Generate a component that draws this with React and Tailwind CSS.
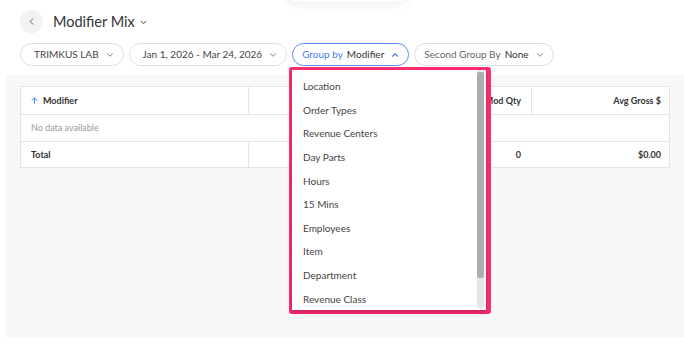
import { ChevronDown, ChevronUp, ChevronLeft, ArrowUp } from "lucide-react";

const groupOptions = [
  "Location",
  "Order Types",
  "Revenue Centers",
  "Day Parts",
  "Hours",
  "15 Mins",
  "Employees",
  "Item",
  "Department",
  "Revenue Class",
];

function Pill({ children, active, tight }) {
  const base = "flex h-[23px] items-center gap-[4px] rounded-full border pr-[8px] text-[10px]";
  return (
    <div
      className={
        base +
        (active ? " border-[#5b8def]" : " border-[#dedede]") +
        (tight ? " pl-[9px]" : " pl-[13px]")
      }
    >
      {children}
    </div>
  );
}

export default function App() {
  return (
    <div className="relative h-[346px] w-[684px] overflow-hidden bg-white font-['Lato',sans-serif] text-[#3a3a3a]">
      <div className="absolute left-[285px] top-[-22px] h-[24px] w-[125px] rounded-full bg-white shadow-[0_2px_10px_rgba(0,0,0,0.07)]" />

      <div className="flex items-center gap-[10px] px-[20px] pt-[10px]">
        <button className="flex h-[23px] w-[23px] items-center justify-center rounded-full bg-[#f2f2f2] text-[#555]">
          <ChevronLeft size={11} strokeWidth={2} />
        </button>
        <h1 className="flex items-center gap-[4px] text-[14.5px] text-[#333]">
          Modifier Mix
          <ChevronDown size={9} strokeWidth={2.4} className="mt-[2px]" />
        </h1>
      </div>

      <div className="mt-[10px] flex gap-[5px] px-[20px]">
        <Pill>
          <span className="text-[#444]">TRIMKUS LAB</span>
          <ChevronDown size={10} strokeWidth={2.2} className="ml-[2px] text-[#777]" />
        </Pill>
        <Pill>
          <span className="text-[#444]">Jan 1, 2026 - Mar 24, 2026</span>
          <ChevronDown size={10} strokeWidth={2.2} className="ml-[2px] text-[#777]" />
        </Pill>
        <Pill active tight>
          <span className="text-[#4a7cf0]">Group by</span>
          <span className="text-[#333]">Modifier</span>
          <ChevronUp size={10} strokeWidth={2.6} className="ml-[2px] text-[#4a7cf0]" />
        </Pill>
        <Pill tight>
          <span className="text-[#666]">Second Group By</span>
          <span className="text-[#333]">None</span>
          <ChevronDown size={10} strokeWidth={2.2} className="ml-[2px] text-[#777]" />
        </Pill>
      </div>

      <div className="ml-[6px] mt-[9px] h-[262px] bg-[#f8f8f8] px-[14px] pt-[11px]">
        <div className="border border-[#e4e4e4] bg-white text-[9px]">
          <div className="grid h-[28px] grid-cols-[227px_142px_141px_1fr] border-b border-[#e4e4e4] font-bold text-[#333]">
            <div className="flex items-center gap-[4px] pl-[9px]">
              <ArrowUp size={9} strokeWidth={2.5} className="text-[#3b7cf0]" />
              Modifier
            </div>
            <div className="border-l border-[#e4e4e4]" />
            <div className="flex items-center justify-end border-l border-[#e4e4e4] pr-[10px]">Mod Qty</div>
            <div className="flex items-center justify-end border-l border-[#e4e4e4] pr-[8px]">Avg Gross $</div>
          </div>
          <div className="flex h-[27px] items-center border-b border-[#e4e4e4] pl-[10px] text-[#999]">
            No data available
          </div>
          <div className="grid h-[25px] grid-cols-[227px_142px_141px_1fr] font-bold text-[#333]">
            <div className="flex items-center pl-[10px]">Total</div>
            <div className="border-l border-[#e4e4e4]" />
            <div className="flex items-center justify-end pr-[10px]">0</div>
            <div className="flex items-center justify-end pr-[8px]">$0.00</div>
          </div>
        </div>
      </div>

      <div className="absolute left-[289px] top-[67px] h-[247px] w-[202px] rounded-[3px] border-[3px] border-[#ff2d6f] bg-[#ff2d6f]">
        <div className="relative h-[240px] w-[194px] overflow-hidden bg-white shadow-[0_2px_4px_rgba(0,0,0,0.25)]">
          <ul className="pt-[5px] text-[10px] text-[#444]">
            {groupOptions.map((opt) => (
              <li key={opt} className="flex h-[23.6px] items-center pl-[11px]">
                {opt}
              </li>
            ))}
          </ul>
          <div className="absolute right-[2px] top-0 h-[238px] w-[7px] bg-[#e6e6e6]">
            <div className="mt-[2px] h-[206px] w-[7px] rounded-[2px] bg-[#adadad]" />
          </div>
        </div>
      </div>
    </div>
  );
}
